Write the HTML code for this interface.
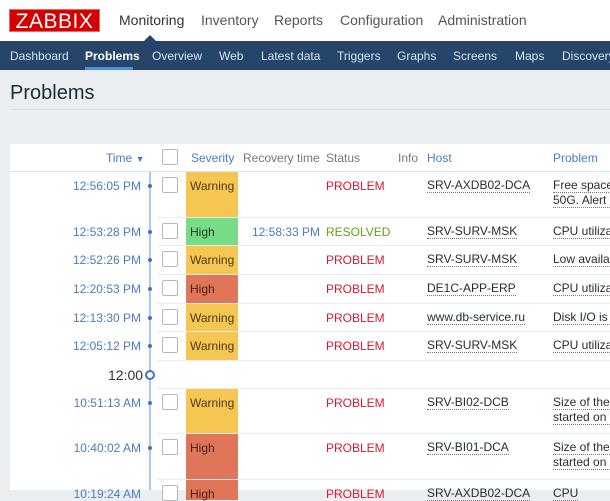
<!DOCTYPE html>
<html><head><meta charset="utf-8"><style>
*{margin:0;padding:0;box-sizing:border-box}
body{width:610px;height:490px;overflow:hidden;background:#ebeef0;font-family:"Liberation Sans",Arial,sans-serif;font-size:12px;position:relative;color:#1f2c33}
.a{position:absolute;white-space:nowrap}
#hdr{position:absolute;left:0;top:0;width:610px;height:41px;background:#fff}
#logo{left:9px;top:9px;width:91px;height:23px;background:#d40000;color:#fff;font-size:21px;line-height:23px;text-align:center;letter-spacing:0.5px;border:1px solid #e66}
.m{top:12px;font-size:14px;color:#555}
#nav{position:absolute;left:0;top:41px;width:610px;height:29px;background:#25456b}
.n{top:49px;color:#d8e2ee;font-size:12px}
.tl{position:absolute;left:149px;width:2px;background:#a9cbeb}
.row{position:absolute;left:157px;width:453px;height:1px;background:#ebebeb}
.t{color:#4a7cbf;text-align:right;width:130px;left:11px}
.cb{position:absolute;left:162px;width:16px;height:16px;border:1px solid #b4b8bc;border-radius:2px;background:#fff}
.sev{position:absolute;left:186px;width:52px;padding:7px 4px;color:#4a3c1a}
.w{background:#f6c653}.g{background:#77dc86;color:#1f3d21}.r{background:#df7659;color:#4a1f15}
.p{color:#d9192e;left:326px}
.s{color:#5fa319;left:326px}
.h{left:427px;border-bottom:1px dotted #777;line-height:13px}
.pr{left:553px;border-bottom:1px dotted #777;line-height:13px}
.dot{position:absolute;left:148px;width:4px;height:4px;border-radius:2px;background:#3c75c0}
.th{top:151px;color:#4a7cbf}
</style></head><body>
<div id="hdr"></div>
<div class="a" id="logo">ZABBIX</div>
<div class="a m" style="left:119px;color:#333">Monitoring</div>
<div class="a m" style="left:201px">Inventory</div>
<div class="a m" style="left:274px">Reports</div>
<div class="a m" style="left:340px">Configuration</div>
<div class="a m" style="left:438px">Administration</div>
<div id="nav"></div>
<div class="a" style="left:144px;top:35px;width:0;height:0;border-left:6px solid transparent;border-right:6px solid transparent;border-bottom:6px solid #25456b"></div>
<div class="a n" style="left:10px">Dashboard</div>
<div class="a n" style="left:85px;color:#fff;font-weight:bold">Problems</div>
<div class="a" style="left:85px;top:67px;width:48px;height:3px;background:#4f8fd6"></div>
<div class="a n" style="left:152px">Overview</div>
<div class="a n" style="left:219px">Web</div>
<div class="a n" style="left:261px">Latest data</div>
<div class="a n" style="left:337px">Triggers</div>
<div class="a n" style="left:397px">Graphs</div>
<div class="a n" style="left:453px">Screens</div>
<div class="a n" style="left:515px">Maps</div>
<div class="a n" style="left:562px">Discovery</div>
<div class="a" style="left:10px;top:82px;font-size:20px;color:#1f2c33">Problems</div>
<div class="a" style="left:10px;top:109px;width:600px;height:1px;background:#dde0e3"></div>
<div class="a" style="left:10px;top:144px;width:600px;height:346px;background:#fff"></div>
<div class="a" style="left:10px;top:171px;width:600px;height:1px;background:#dfe3e6"></div>
<div class="a th" style="left:106px">Time <span style="font-size:9px">▼</span></div>
<div class="cb" style="top:149px"></div>
<div class="a th" style="left:191px">Severity</div>
<div class="a th" style="left:243px;color:#777">Recovery time</div>
<div class="a th" style="left:326px;color:#777">Status</div>
<div class="a th" style="left:398px;color:#777">Info</div>
<div class="a th" style="left:427px">Host</div>
<div class="a th" style="left:553px">Problem</div>
<div class="tl" style="top:172px;height:318px"></div>

<!-- row1 -->
<div class="a t" style="top:179px">12:56:05 PM</div><div class="dot" style="top:184px"></div>
<div class="cb" style="top:177px"></div>
<div class="sev w" style="top:172px;height:45px">Warning</div>
<div class="a p" style="top:179px">PROBLEM</div>
<div class="a h" style="top:179px">SRV-AXDB02-DCA</div>
<div class="a pr" style="top:179px">Free space</div>
<div class="a pr" style="top:194px">50G. Alert s</div>
<div class="row" style="top:217px"></div>
<!-- row2 -->
<div class="a t" style="top:225px">12:53:28 PM</div><div class="dot" style="top:230px"></div>
<div class="cb" style="top:223px"></div>
<div class="sev g" style="top:218px;height:27px">High</div>
<div class="a" style="left:252px;top:225px;color:#4a7cbf">12:58:33 PM</div>
<div class="a s" style="top:225px">RESOLVED</div>
<div class="a h" style="top:225px">SRV-SURV-MSK</div>
<div class="a pr" style="top:225px">CPU utiliza</div>
<div class="row" style="top:245px"></div>
<!-- row3 -->
<div class="a t" style="top:253px">12:52:26 PM</div><div class="dot" style="top:258px"></div>
<div class="cb" style="top:251px"></div>
<div class="sev w" style="top:246px;height:28px">Warning</div>
<div class="a p" style="top:253px">PROBLEM</div>
<div class="a h" style="top:253px">SRV-SURV-MSK</div>
<div class="a pr" style="top:253px">Low availab</div>
<div class="row" style="top:274px"></div>
<!-- row4 -->
<div class="a t" style="top:282px">12:20:53 PM</div><div class="dot" style="top:287px"></div>
<div class="cb" style="top:280px"></div>
<div class="sev r" style="top:275px;height:28px">High</div>
<div class="a p" style="top:282px">PROBLEM</div>
<div class="a h" style="top:282px">DE1C-APP-ERP</div>
<div class="a pr" style="top:282px">CPU utiliza</div>
<div class="row" style="top:303px"></div>
<!-- row5 -->
<div class="a t" style="top:311px">12:13:30 PM</div><div class="dot" style="top:316px"></div>
<div class="cb" style="top:309px"></div>
<div class="sev w" style="top:304px;height:27px">Warning</div>
<div class="a p" style="top:311px">PROBLEM</div>
<div class="a h" style="top:311px">www.db-service.ru</div>
<div class="a pr" style="top:311px">Disk I/O is o</div>
<div class="row" style="top:331px"></div>
<!-- row6 -->
<div class="a t" style="top:339px">12:05:12 PM</div><div class="dot" style="top:344px"></div>
<div class="cb" style="top:337px"></div>
<div class="sev w" style="top:332px;height:28px">Warning</div>
<div class="a p" style="top:339px">PROBLEM</div>
<div class="a h" style="top:339px">SRV-SURV-MSK</div>
<div class="a pr" style="top:339px">CPU utiliza</div>
<div class="row" style="top:360px"></div>
<!-- 12:00 -->
<div class="a" style="left:108px;top:367px;font-size:14px;color:#333">12:00</div>
<div class="a" style="left:145px;top:370px;width:10px;height:10px;border:2px solid #3c75c0;border-radius:5px;background:#fff"></div>
<div class="row" style="top:388px"></div>
<!-- row7 -->
<div class="a t" style="top:396px">10:51:13 AM</div><div class="dot" style="top:401px"></div>
<div class="cb" style="top:394px"></div>
<div class="sev w" style="top:389px;height:44px">Warning</div>
<div class="a p" style="top:396px">PROBLEM</div>
<div class="a h" style="top:396px">SRV-BI02-DCB</div>
<div class="a pr" style="top:396px">Size of the</div>
<div class="a pr" style="top:411px">started on 9</div>
<div class="row" style="top:433px"></div>
<!-- row8 -->
<div class="a t" style="top:441px">10:40:02 AM</div><div class="dot" style="top:446px"></div>
<div class="cb" style="top:439px"></div>
<div class="sev r" style="top:434px;height:45px">High</div>
<div class="a p" style="top:441px">PROBLEM</div>
<div class="a h" style="top:441px">SRV-BI01-DCA</div>
<div class="a pr" style="top:441px">Size of the</div>
<div class="a pr" style="top:456px">started on 4</div>
<div class="row" style="top:479px"></div>
<!-- row9 -->
<div class="a t" style="top:487px">10:19:24 AM</div>
<div class="cb" style="top:485px"></div>
<div class="sev r" style="top:480px;height:20px">High</div>
<div class="a p" style="top:487px">PROBLEM</div>
<div class="a h" style="top:487px">SRV-AXDB02-DCA</div>
<div class="a pr" style="top:487px">CPU</div>
</body></html>
